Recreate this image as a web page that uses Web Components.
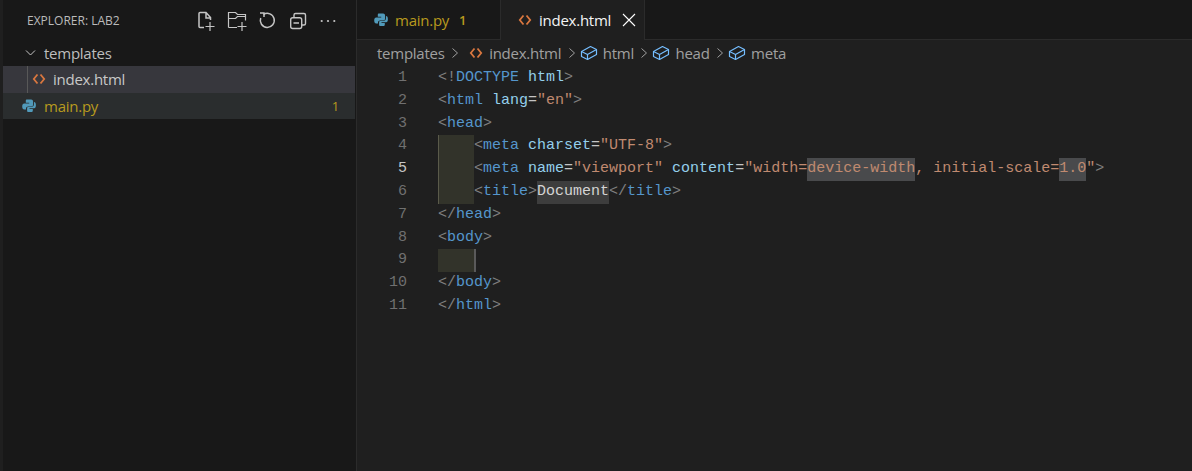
<!DOCTYPE html>
<html lang="en">
<head>
<meta charset="UTF-8">
<title>Explorer</title>
<style>
  html, body { margin: 0; height: 100%; background: #1f1f1f; overflow: hidden; }
</style>
</head>
<body>

<vs-workbench>
  <vs-sidebar slot="side" heading="EXPLORER: LAB2">
    <vs-tree-row depth="folder" label="templates"></vs-tree-row>
    <vs-tree-row depth="child" icon="html" label="index.html"></vs-tree-row>
    <vs-tree-row depth="root" icon="py" label="main.py" badge="1"></vs-tree-row>
  </vs-sidebar>
  <vs-tabs slot="tabs">
    <vs-tab icon="py" label="main.py" badge="1"></vs-tab>
    <vs-tab icon="html" label="index.html" active></vs-tab>
  </vs-tabs>
  <vs-crumbs slot="crumbs"></vs-crumbs>
  <vs-editor slot="editor">
    <code-line n="1"><i>&lt;!</i><b>DOCTYPE</b> <u>html</u><i>&gt;</i></code-line>
    <code-line n="2"><i>&lt;</i><b>html</b> <u>lang</u><s>=</s><em>"en"</em><i>&gt;</i></code-line>
    <code-line n="3"><i>&lt;</i><b>head</b><i>&gt;</i></code-line>
    <code-line n="4" indent><i>&lt;</i><b>meta</b> <u>charset</u><s>=</s><em>"UTF-8"</em><i>&gt;</i></code-line>
    <code-line n="5" indent current><i>&lt;</i><b>meta</b> <u>name</u><s>=</s><em>"viewport"</em> <u>content</u><s>=</s><em>"width=</em><mark>device-width</mark><em>, initial-scale=</em><mark>1.0</mark><em>"</em><i>&gt;</i></code-line>
    <code-line n="6" indent><i>&lt;</i><b>title</b><i>&gt;</i><mark class="word">Document</mark><i>&lt;/</i><b>title</b><i>&gt;</i></code-line>
    <code-line n="7"><i>&lt;/</i><b>head</b><i>&gt;</i></code-line>
    <code-line n="8"><i>&lt;</i><b>body</b><i>&gt;</i></code-line>
    <code-line n="9" blank></code-line>
    <code-line n="10"><i>&lt;/</i><b>body</b><i>&gt;</i></code-line>
    <code-line n="11"><i>&lt;/</i><b>html</b><i>&gt;</i></code-line>
  </vs-editor>
</vs-workbench>

<script>
const ICONS = {
  html: `<svg width="16" height="16" viewBox="0 0 16 16" fill="none" stroke="#d9773f" stroke-width="1.8"><path d="M6.500 3.500 2.800 8l3.700 4.500M9.500 3.500 13.200 8l-3.700 4.500"/></svg>`,
  py: `<svg width="16" height="16" viewBox="0 0 16 16" fill="#519aba"><path d="M6 1.500h4.200c1 0 1.800.8 1.800 1.800V7c0 .8-.7 1.400-1.500 1.400H7.200C5.900 8.400 5 9.300 5 10.600v.9H3.200C2 11.500 1.200 10.400 1.200 8.500c0-2 .8-3 2-3H8.200V4.700H4.800V2.800C4.800 2 5.200 1.500 6 1.500Z"/><path d="M13 4.500h-.1v3.100c0 1.300-1 2.300-2.300 2.300H7.400c-.8 0-1.300.5-1.300 1.300v2.500c0 .7.500 1.300 1.300 1.300h2.900c.9 0 1.500-.6 1.500-1.300v-1.700H8.500v-.8h4.700c1 0 1.700-1 1.700-3 0-2-.7-3.200-1.900-3.200Z" transform="translate(0 -1)"/></svg>`,
  cube: `<svg width="18" height="18" viewBox="0 0 18 18" fill="none" stroke="#75beff" stroke-width="1.200" stroke-linejoin="round"><path d="M1.500 7.500 10.500 2.500 16.500 5.500V10.500L7.500 15.500 1.500 12.500Z"/><path d="M1.500 7.500 7.500 10.500 16.500 5.500M7.500 10.500V15.500"/></svg>`
};

class VsWorkbench extends HTMLElement {
  constructor() {
    super();
    this.attachShadow({ mode: 'open' }).innerHTML = `
    <style>
      :host { display: grid; grid-template-columns: 357px 1fr; height: 471px; background: #1f1f1f; }
      .side { display: block; background: #181818; border-left: 3px solid #1f1f1f; box-sizing: border-box; padding-right: 1px; border-right: 1px solid #2b2b2b; }
      .main { display: flex; flex-direction: column; min-width: 0; }
    </style>
    <div class="side"><slot name="side"></slot></div>
    <div class="main">
      <slot name="tabs"></slot>
      <slot name="crumbs"></slot>
      <slot name="editor"></slot>
    </div>`;
  }
}

class VsSidebar extends HTMLElement {
  constructor() {
    super();
    this.attachShadow({ mode: 'open' }).innerHTML = `
    <style>
      :host { display: block; font-family: "Open Sans", "Noto Sans", sans-serif; }
      header { display: flex; align-items: center; height: 41px; padding: 0 16px 0 24px; }
      h2 { flex: 1; margin: 0; font-size: 12px; font-weight: 400; color: #bbbbbb; }
      nav { display: flex; gap: 8.500px; align-items: center; padding-top: 1px; }
      svg { display: block; }
    </style>
    <header>
      <h2>${this.getAttribute('heading')}</h2>
      <nav>
        <svg width="22" height="22" viewBox="0 0 22 22" fill="none" stroke="#c5c5c5" stroke-width="1.500"><path d="M9 17.500H5a1 1 0 0 1-1-1V3.500a1 1 0 0 1 1-1h6l4.500 5V10M11 2.500V8h4.500"/><path d="M10.500 16.500h9M15 12v9" stroke-width="1.200"/></svg>
        <svg width="22" height="22" viewBox="0 0 22 22" fill="none" stroke="#c5c5c5" stroke-width="1.200"><path d="M2.500 17.500V2.500h7l2 2h8v6"/><path d="M2.500 8.500h7l2-2h8"/><path d="M2.500 17.500H11M11.500 16.500h9M16 12v9"/></svg>
        <svg width="22" height="22" viewBox="0 0 22 22" fill="none" stroke="#c5c5c5" stroke-width="1.500"><path d="M7.500 4.500A7 7 0 1 1 4.700 8"/><path d="M4 3h4v4"/></svg>
        <svg width="22" height="22" viewBox="0 0 22 22" fill="none" stroke="#c5c5c5" stroke-width="1.400"><rect x="3.700" y="7.700" width="11" height="10.800" rx="2"/><path d="M7 7.500V5a1.500 1.500 0 0 1 1.500-1.500H17A1.500 1.500 0 0 1 18.500 5v8.500A1.500 1.500 0 0 1 17 15h-2M6.500 13h5.500"/></svg>
        <svg width="22" height="22" viewBox="0 0 22 22" fill="#c5c5c5"><circle cx="4.700" cy="11" r="1.100"/><circle cx="11" cy="11" r="1.100"/><circle cx="17.300" cy="11" r="1.100"/></svg>
      </nav>
    </header>
    <slot></slot>`;
  }
}

class VsTreeRow extends HTMLElement {
  constructor() {
    super();
    const depth = this.getAttribute('depth');
    const icon = this.getAttribute('icon');
    const lead = depth === 'folder'
      ? `<svg width="16" height="16" viewBox="0 0 16 16" fill="none" stroke="#c5c5c5" stroke-width="1"><path d="M3 5.500 7.500 10 12 5.500"/></svg>`
      : ICONS[icon];
    this.attachShadow({ mode: 'open' }).innerHTML = `
    <style>
      :host { display: flex; align-items: center; height: 26px; font-size: 15px; color: #c8c8c8; letter-spacing: -.25px; }
      :host([depth="folder"]) { box-sizing: border-box; height: 25px; padding: 0 0 2px 20px; gap: 5px; color: #bdbdbd; }
      :host([depth="child"]) { box-sizing: border-box; height: 27px; padding: 0 0 1px 24px; gap: 3px; background: #37373d; }
      :host([depth="root"]) { padding-left: 18px; gap: 7px; background: #2a2d2e; color: #b89a1e; }
      :host([depth="child"])::before { content: ""; width: 1px; height: 27px; margin-bottom: -1px; background: #585858; }
      :host([depth="child"]) .name { margin-left: 3px; }
      .name { flex: 1; }
      .badge { padding-right: 16px; font-size: 13px; }
      svg { flex: none; display: block; }
    </style>
    ${lead}<span class="name">${this.getAttribute('label')}</span>
    ${this.hasAttribute('badge') ? `<span class="badge">${this.getAttribute('badge')}</span>` : ''}`;
  }
}

class VsTabs extends HTMLElement {
  constructor() {
    super();
    this.attachShadow({ mode: 'open' }).innerHTML = `
    <style>
      :host { display: flex; height: 40px; box-sizing: border-box; background: #181818; border-bottom: 1px solid #2b2b2b; }
    </style>
    <slot></slot>`;
  }
}

class VsTab extends HTMLElement {
  constructor() {
    super();
    const active = this.hasAttribute('active');
    this.attachShadow({ mode: 'open' }).innerHTML = `
    <style>
      :host { display: flex; align-items: center; gap: 6px; box-sizing: border-box; height: 40px; width: 144px; padding-left: 16px;
        font: 15px "Open Sans", "Noto Sans", sans-serif; letter-spacing: -.25px; color: #b89a1e; border-right: 1px solid #2b2b2b; }
      :host([active]) { background: #1f1f1f; color: #f4f4f4; }
      .badge { margin-left: 4px; font-size: 13px; font-weight: 600; }
      svg { display: block; flex: none; }
      .x { margin-left: 4px; }
    </style>
    ${ICONS[this.getAttribute('icon')]}<span>${this.getAttribute('label')}</span>
    ${this.hasAttribute('badge') ? `<span class="badge">${this.getAttribute('badge')}</span>` : ''}
    ${active ? `<svg class="x" width="16" height="16" viewBox="0 0 16 16" fill="none" stroke="#ffffff" stroke-width="1.100"><path d="M2 2 14 14M14 2 2 14"/></svg>` : ''}`;
  }
}

class VsCrumbs extends HTMLElement {
  constructor() {
    super();
    const sep = `<svg class="sep" width="8" height="12" viewBox="0 0 8 12" fill="none" stroke="#a0a0a0" stroke-width="1"><path d="M1.500 1.500 6.500 6 1.500 10.500"/></svg>`;
    this.attachShadow({ mode: 'open' }).innerHTML = `
    <style>
      :host { display: flex; align-items: center; height: 27px; padding: 0 0 1px 20px; box-sizing: border-box; font: 15px "Open Sans", "Noto Sans", sans-serif; letter-spacing: -.25px; color: #a0a0a0; }
      svg { display: block; flex: none; }
      .sep { margin: 0 4px 0 6.500px; }
      .file { margin: 0 5px 0 5px; }
      .ic { margin-right: 5px; }
    </style>
    <span>templates</span>${sep}
    <span class="file">${ICONS.html}</span><span>index.html</span>${sep}
    <span class="ic">${ICONS.cube}</span><span>html</span>${sep}
    <span class="ic">${ICONS.cube}</span><span>head</span>${sep}
    <span class="ic">${ICONS.cube}</span><span>meta</span>`;
  }
}

class VsEditor extends HTMLElement {
  constructor() {
    super();
    this.attachShadow({ mode: 'open' }).innerHTML = `
    <style>
      :host { display: block; font: 15px/22.8px "Liberation Mono", monospace; background: #1f1f1f; }
    </style>
    <slot></slot>`;
  }
}

class CodeLine extends HTMLElement {
  constructor() {
    super();
    const indent = this.hasAttribute('indent');
    const blank = this.hasAttribute('blank');
    this.attachShadow({ mode: 'open' }).innerHTML = `
    <style>
      :host { display: flex; height: 22.8px; white-space: pre; color: #d4d4d4; }
      .num { box-sizing: border-box; width: 50px; text-align: right; color: #707070; }
      :host([current]) .num { color: #c6c6c6; }
      .code { margin-left: 31px; display: flex; }
      .lead { display: block; box-sizing: border-box; width: 36px; height: 22.8px; background: #32332a; }
      .lead.guide { border-left: 1px solid #5a5a4a; }
      .caret { display: block; width: 2px; height: 22.8px; background: #5a5a5a; }
      ::slotted(i) { font-style: normal; color: #808080; }
      ::slotted(b) { font-weight: 400; color: #5596cc; }
      ::slotted(u) { text-decoration: none; color: #94cfec; }
      ::slotted(s) { text-decoration: none; color: #c4c4c4; }
      ::slotted(em) { font-style: normal; color: #c08a70; }
      ::slotted(mark) { display: inline-block; background: #494a4c; color: #c08a70; }
      ::slotted(mark.word) { background: #3d3d3d; color: #d4d4d4; }
    </style>
    <span class="num">${this.getAttribute('n')}</span>
    <span class="code">
      ${indent ? '<span class="lead guide"></span>' : ''}${blank ? '<span class="lead"></span><span class="caret"></span>' : ''}<span><slot></slot></span>
    </span>`;
  }
}

customElements.define('vs-workbench', VsWorkbench);
customElements.define('vs-sidebar', VsSidebar);
customElements.define('vs-tree-row', VsTreeRow);
customElements.define('vs-tabs', VsTabs);
customElements.define('vs-tab', VsTab);
customElements.define('vs-crumbs', VsCrumbs);
customElements.define('vs-editor', VsEditor);
customElements.define('code-line', CodeLine);
</script>
</body>
</html>
